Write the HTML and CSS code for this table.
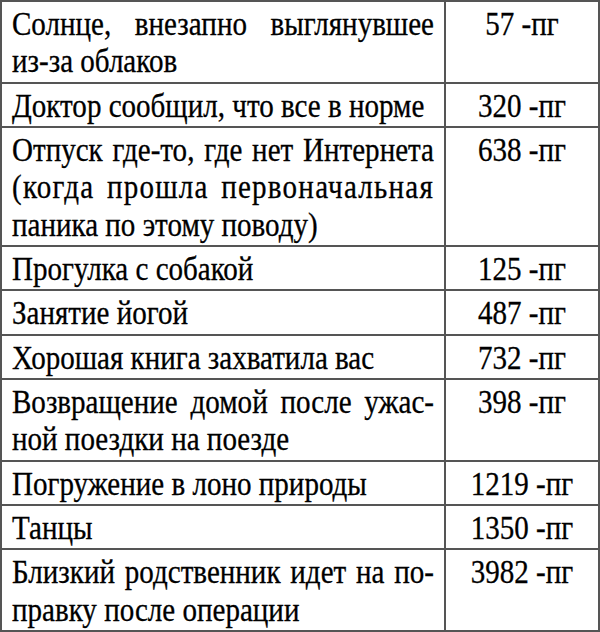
FILE: index.html
```html
<!DOCTYPE html>
<html lang="ru">
<head>
<meta charset="utf-8">
<title>Таблица</title>
<link rel="stylesheet" href="styles.css">
</head>
<body>
<table class="prices">
<colgroup><col class="c-item"><col class="c-price"></colgroup>
<tbody>
<tr><td class="item"><span class="ln j">Солнце, внезапно выглянувшее</span><span class="ln">из-за облаков</span></td><td class="price"><span class="num">57 -пг</span></td></tr>
<tr><td class="item"><span class="ln">Доктор сообщил, что все в норме</span></td><td class="price"><span class="num">320 -пг</span></td></tr>
<tr><td class="item"><span class="ln j">Отпуск где-то, где нет Интернета</span><span class="ln j spread">(когда прошла первоначальная</span><span class="ln">паника по этому поводу)</span></td><td class="price"><span class="num">638 -пг</span></td></tr>
<tr><td class="item"><span class="ln">Прогулка с собакой</span></td><td class="price"><span class="num">125 -пг</span></td></tr>
<tr><td class="item"><span class="ln">Занятие йогой</span></td><td class="price"><span class="num">487 -пг</span></td></tr>
<tr><td class="item"><span class="ln">Хорошая книга захватила вас</span></td><td class="price"><span class="num">732 -пг</span></td></tr>
<tr><td class="item"><span class="ln j">Возвращение домой после ужас-</span><span class="ln">ной поездки на поезде</span></td><td class="price"><span class="num">398 -пг</span></td></tr>
<tr><td class="item"><span class="ln">Погружение в лоно природы</span></td><td class="price"><span class="num">1219 -пг</span></td></tr>
<tr><td class="item"><span class="ln">Танцы</span></td><td class="price"><span class="num">1350 -пг</span></td></tr>
<tr><td class="item"><span class="ln j">Близкий родственник идет на по-</span><span class="ln">правку после операции</span></td><td class="price"><span class="num">3982 -пг</span></td></tr>
</tbody>
</table>
</body>
</html>
```

FILE: styles.css
```css
html, body {
  margin: 0;
  padding: 0;
  background: #fff;
}

.prices {
  width: 600px;
  border-collapse: collapse;
  table-layout: fixed;
  font-family: "Liberation Serif", "Times New Roman", serif;
  font-size: 33px;
  line-height: 37.35px;
  color: #000;
  -webkit-text-stroke: 0.3px #000;
}

.c-item {
  width: 444px;
}

.prices td {
  border: 2px solid #555;
  padding: 4px 10px 1px;
  vertical-align: top;
}

/* Liberation Serif is wider than the condensed face of the original,
   so each line is laid out wider and narrowed back horizontally. */
.ln {
  display: block;
  width: 113.64%;
  text-align: left;
  white-space: nowrap;
  transform: scaleX(0.88);
  transform-origin: 0 0;
}

.j {
  text-align: justify;
  text-align-last: justify;
}

.spread {
  letter-spacing: 1.4px;
}

.price {
  text-align: center;
}

.num {
  display: block;
  white-space: nowrap;
  transform: scaleX(0.88);
  transform-origin: 50% 0;
}
```
